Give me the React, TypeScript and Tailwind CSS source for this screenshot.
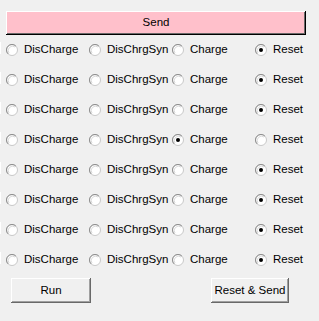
const rows: number[] = [3, 3, 3, 2, 3, 3, 3, 3];
const labels = ['DisCharge', 'DisChrgSyn', 'Charge', 'Reset'];

function Radio({ checked }: { checked: boolean }) {
  return (
    <svg width="12" height="12" viewBox="0 0 12 12" className="shrink-0 block">
      <circle cx="6" cy="6" r="5.5" fill="#fff" stroke="#c8c8c8" strokeWidth="1" />
      <path d="M2.1 9.9 A5.5 5.5 0 0 1 9.9 2.1" fill="none" stroke="#8c8c8c" strokeWidth="1" />
      <path d="M3 9 A4.3 4.3 0 0 1 9 3" fill="none" stroke="#dadada" strokeWidth="1" />
      {checked && <circle cx="6" cy="6" r="2" fill="#000" />}
    </svg>
  );
}

export default function App() {
  return (
    <div
      className="w-[319px] h-[321px] bg-[#f0f0f0] text-black text-[11.5px] overflow-hidden"
      style={{ fontFamily: '"Liberation Sans", Arial, sans-serif' }}
    >
      <div className="pt-[11px] pl-[6px]">
        <button className="w-[300px] h-[24px] bg-[#ffc0cb] flex items-center justify-center shadow-[inset_-1px_-1px_#000,inset_1px_1px_#fff,inset_-2px_-2px_#696969]">
          Send
        </button>
      </div>

      {/* radio rows */}
      <div className="flex flex-col">
        {rows.map((sel, i) => (
          <div key={i} className="relative h-[30px] flex items-center pl-[6px]">
            <span className="absolute left-0 top-[7px] w-px h-[12px] bg-white" />
            {labels.map((l, j) => (
              <label key={l} className="w-[83px] shrink-0 flex items-center gap-[6px] whitespace-nowrap">
                <Radio checked={sel === j} />
                <span className="leading-none">{l}</span>
              </label>
            ))}
          </div>
        ))}
      </div>

      <div className="flex justify-between pl-[11px] pr-[30px] pt-[3px]">
        <button className="w-[80px] h-[25px] bg-[#f0f0f0] flex items-center justify-center shadow-[inset_-1px_-1px_#696969,inset_1px_1px_#fff,inset_-2px_-2px_#a0a0a0]">
          Run
        </button>
        <button className="w-[78px] h-[25px] bg-[#f0f0f0] flex items-center justify-center shadow-[inset_-1px_-1px_#696969,inset_1px_1px_#fff,inset_-2px_-2px_#a0a0a0]">
          Reset &amp; Send
        </button>
      </div>
    </div>
  );
}
